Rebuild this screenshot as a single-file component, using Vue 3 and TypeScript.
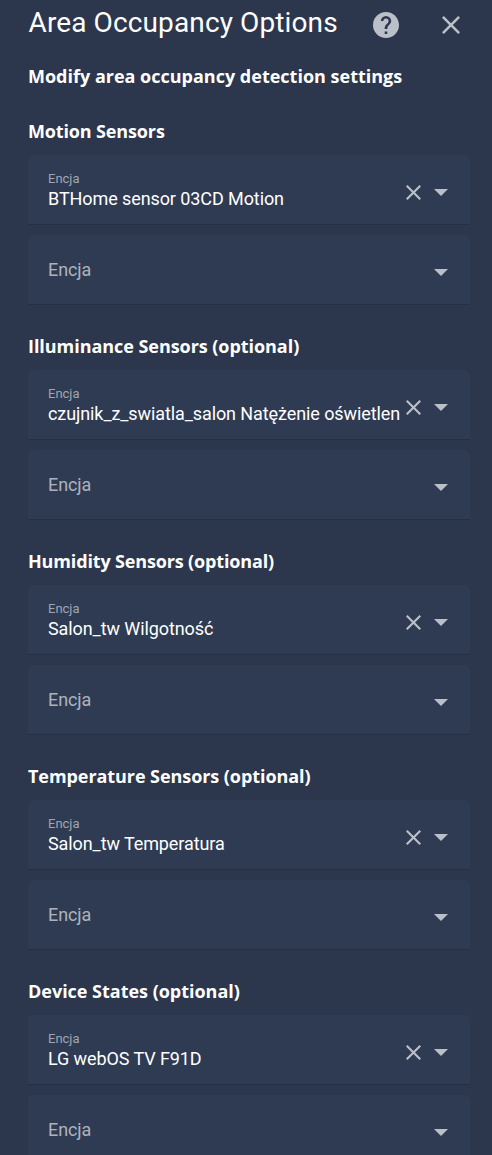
<script setup lang="ts">
interface Section {
  title: string
  value: string
  spacing: number
}

const intro = { title: 'Modify area occupancy detection settings', spacing: 0 }

const sections: Section[] = [
  { title: 'Motion Sensors', value: 'BTHome sensor 03CD Motion', spacing: -0.14 },
  { title: 'Illuminance Sensors (optional)', value: 'czujnik_z_swiatla_salon Natężenie oświetlen', spacing: -0.05 },
  { title: 'Humidity Sensors (optional)', value: 'Salon_tw Wilgotność', spacing: -0.15 },
  { title: 'Temperature Sensors (optional)', value: 'Salon_tw Temperatura', spacing: -0.07 },
  { title: 'Device States (optional)', value: 'LG webOS TV F91D', spacing: -0.02 },
]
</script>

<template>
  <main class="dialog">
    <header class="header">
      <h1 class="title">Area Occupancy Options</h1>
      <svg class="help" viewBox="2 2 20 20" aria-label="Help">
        <path d="M15.07 11.25 14.17 12.17C13.45 12.89 13 13.5 13 15H11V14.5C11 13.39 11.45 12.39 12.17 11.67L13.41 10.41C13.78 10.05 14 9.55 14 9A2 2 0 0 0 12 7A2 2 0 0 0 10 9H8A4 4 0 0 1 12 5A4 4 0 0 1 16 9C16 9.88 15.64 10.67 15.07 11.25M13 19H11V17H13M12 2A10 10 0 0 0 2 12A10 10 0 0 0 12 22A10 10 0 0 0 22 12C22 6.47 17.5 2 12 2Z" />
      </svg>
      <svg class="close" viewBox="5 5 14 14" aria-label="Close">
        <path d="M19 6.41 17.59 5 12 10.59 6.41 5 5 6.41 10.59 12 5 17.59 6.41 19 12 13.41 17.59 19 19 17.59 13.41 12Z" />
      </svg>
    </header>
    <h2 class="heading intro"><span :style="{ letterSpacing: intro.spacing + 'px' }">{{ intro.title }}</span></h2>
    <section v-for="s in sections" :key="s.title" class="section">
      <h2 class="heading"><span :style="{ letterSpacing: s.spacing + 'px' }">{{ s.title }}</span></h2>
      <div class="field">
        <div class="text">
          <span class="label">Encja</span>
          <span class="value">{{ s.value }}</span>
        </div>
        <svg class="clear" viewBox="5 5 14 14">
          <path d="M19 6.41 17.59 5 12 10.59 6.41 5 5 6.41 10.59 12 5 17.59 6.41 19 12 13.41 17.59 19 19 17.59 13.41 12Z" />
        </svg>
        <svg class="arrow" viewBox="0 0 14 7"><path d="M0 0H14L7 7Z" /></svg>
      </div>
      <div class="field empty">
        <span class="placeholder">Encja</span>
        <svg class="arrow" viewBox="0 0 14 7"><path d="M0 0H14L7 7Z" /></svg>
      </div>
    </section>
  </main>
</template>

<style>
body {
  background: #2c364d;
}
</style>

<style scoped>
.dialog {
  box-sizing: border-box;
  height: 1155px;
  padding: 0 22px 0 28px;
  overflow: hidden;
  background: #2c364d;
  color: #fff;
  font-family: Roboto, sans-serif;
}
.header {
  display: flex;
  align-items: center;
  height: 50px;
}
.title {
  flex: 1;
  margin: 0;
  padding: 0 0 5px 0.5px;
  font-size: 28px;
  font-weight: 400;
  letter-spacing: 0.12px;
  line-height: 36px;
  white-space: nowrap;
}
svg {
  display: block;
  flex: none;
  fill: #babfc8;
}
.help {
  width: 26px;
  height: 26px;
  margin-right: 43px;
}
.close {
  width: 18px;
  height: 18px;
  margin-right: 10px;
}
.heading {
  height: 24px;
  margin: 0;
  font-family: "Open Sans", sans-serif;
  font-size: 18px;
  font-weight: 700;
  line-height: 24px;
  white-space: nowrap;
}
.intro {
  margin: 14px 0 31px;
}
.section {
  display: flex;
  flex-direction: column;
  height: 215px;
}
.field {
  box-sizing: border-box;
  display: flex;
  align-items: center;
  flex: none;
  height: 70px;
  margin-top: 12px;
  padding: 0 22px 0 20px;
  border-bottom: 1px solid #253048;
  border-radius: 5px 5px 0 0;
  background: #2f3b52;
}
.empty {
  margin-top: 10px;
}
.text {
  flex: none;
  width: 354px;
  padding-top: 2px;
  margin-right: 4px;
}
.label,
.value {
  display: block;
  white-space: nowrap;
}
.label {
  color: #a0a6b1;
  font-size: 13px;
  line-height: 16px;
}
.value {
  font-size: 18px;
  letter-spacing: -0.09px;
  line-height: 24px;
}
.placeholder {
  flex: 1;
  color: #adb3bd;
  font-size: 18px;
  letter-spacing: -0.09px;
}
.clear {
  width: 15px;
  height: 15px;
  margin: 5px 13px 0 0;
}
.arrow {
  width: 14px;
  height: 7px;
  margin-top: 5px;
}
</style>
